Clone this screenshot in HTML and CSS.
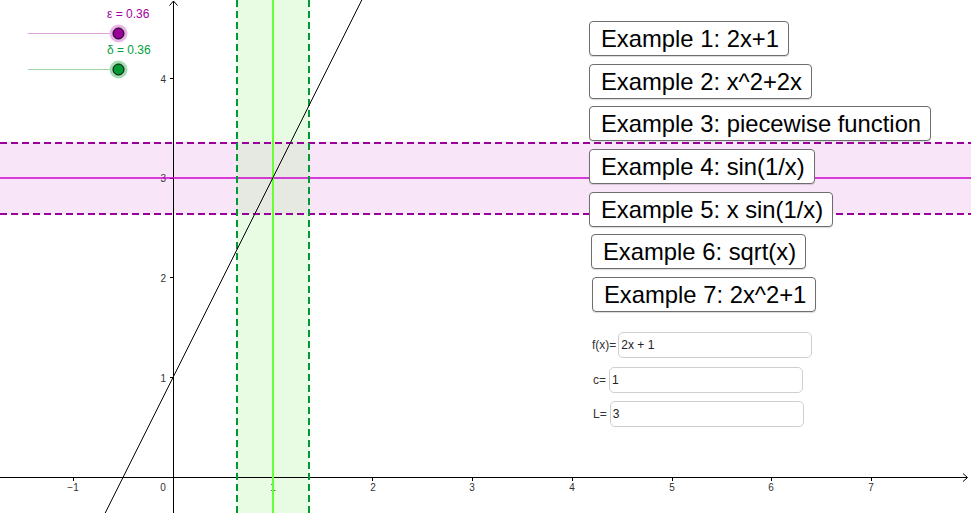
FILE: index.html
```html
<!DOCTYPE html>
<html>
<head>
<meta charset="utf-8">
<link rel="stylesheet" href="styles.css">
</head>
<body>
<div class="applet">
  <svg class="canvas" width="971" height="513" viewBox="0 0 971 513" xmlns="http://www.w3.org/2000/svg">
    <!-- bands -->
    <rect x="0" y="142.5" width="971" height="71.5" fill="#f8e6f8"/>
    <rect x="237" y="0" width="72" height="513" fill="#e8fce4"/>
    <rect x="237" y="142.5" width="72" height="71.5" fill="#e6e8e2"/>

    <!-- axes -->
    <g stroke="#000" stroke-width="1" fill="none">
      <line x1="0" y1="477.5" x2="967" y2="477.5"/>
      <polyline points="963,473.5 967.5,477.5 963,481.5"/>
      <line x1="173.5" y1="513" x2="173.5" y2="1"/>
      <polyline points="169.5,5.5 173.5,1 177.5,5.5"/>
      <!-- x ticks -->
      <line x1="73.5" y1="477.5" x2="73.5" y2="481"/>
      <line x1="273.5" y1="477.5" x2="273.5" y2="481"/>
      <line x1="372.5" y1="477.5" x2="372.5" y2="481"/>
      <line x1="472.5" y1="477.5" x2="472.5" y2="481"/>
      <line x1="572.5" y1="477.5" x2="572.5" y2="481"/>
      <line x1="672.5" y1="477.5" x2="672.5" y2="481"/>
      <line x1="771.5" y1="477.5" x2="771.5" y2="481"/>
      <line x1="871.5" y1="477.5" x2="871.5" y2="481"/>
      <!-- y ticks -->
      <line x1="170" y1="377.5" x2="173.5" y2="377.5"/>
      <line x1="170" y1="277.5" x2="173.5" y2="277.5"/>
      <line x1="170" y1="178.5" x2="173.5" y2="178.5"/>
      <line x1="170" y1="78.5" x2="173.5" y2="78.5"/>
    </g>
    <g class="axis-label" text-anchor="middle">
      <text x="73" y="491">−1</text>
      <text x="163" y="491">0</text>
      <text x="273" y="491">1</text>
      <text x="373" y="491">2</text>
      <text x="472" y="491">3</text>
      <text x="572" y="491">4</text>
      <text x="672" y="491">5</text>
      <text x="771" y="491">6</text>
      <text x="871" y="491">7</text>
    </g>
    <g class="axis-label" text-anchor="end">
      <text x="166" y="382">1</text>
      <text x="166" y="282">2</text>
      <text x="166" y="182">3</text>
      <text x="166" y="83">4</text>
    </g>

    <!-- center lines -->
    <line x1="0" y1="178" x2="971" y2="178" stroke="#cc00cc" stroke-width="1.6"/>
    <line x1="273" y1="0" x2="273" y2="513" stroke="#66ff33" stroke-width="2"/>

    <!-- dashed boundaries -->
    <g stroke-width="2" stroke-dasharray="7 4" fill="none">
      <line x1="0" y1="143" x2="971" y2="143" stroke="#990099"/>
      <line x1="0" y1="214" x2="971" y2="214" stroke="#990099"/>
      <line x1="237" y1="0" x2="237" y2="513" stroke="#009933"/>
      <line x1="309" y1="0" x2="309" y2="513" stroke="#009933"/>
    </g>

    <!-- function f(x)=2x+1 -->
    <line x1="105.2" y1="513" x2="361.8" y2="0" stroke="#000" stroke-width="1"/>

    <!-- sliders -->
    <line x1="28" y1="33.5" x2="127" y2="33.5" stroke="#dba6db" stroke-width="1"/>
    <circle cx="118.5" cy="33.5" r="9" fill="#e9b5e9"/>
    <circle cx="118.5" cy="33.5" r="5.5" fill="#990099" stroke="#000" stroke-width="1"/>
    <text class="slider-label eps" x="107" y="18">ε = 0.36</text>

    <line x1="28" y1="69.5" x2="127" y2="69.5" stroke="#9fd3a8" stroke-width="1"/>
    <circle cx="118.5" cy="69.5" r="9" fill="#a6dab3"/>
    <circle cx="118.5" cy="69.5" r="5.5" fill="#009933" stroke="#000" stroke-width="1"/>
    <text class="slider-label del" x="107" y="54">δ = 0.36</text>
  </svg>

  <div class="buttons">
    <button class="btn">Example 1: 2x+1</button>
    <button class="btn">Example 2: x^2+2x</button>
    <button class="btn">Example 3: piecewise function</button>
    <button class="btn">Example 4: sin(1/x)</button>
    <button class="btn">Example 5: x sin(1/x)</button>
    <button class="btn shift2">Example 6: sqrt(x)</button>
    <button class="btn shift3">Example 7: 2x^2+1</button>
  </div>

  <div class="inputs">
    <div class="field"><span class="lbl">f(x)=</span><div class="box">2x + 1</div></div>
    <div class="field"><span class="lbl">c=</span><div class="box">1</div></div>
    <div class="field"><span class="lbl">L=</span><div class="box">3</div></div>
  </div>
</div>
</body>
</html>
```

FILE: styles.css
```css
html, body {
  margin: 0;
  padding: 0;
  background: #fff;
}

.applet {
  position: relative;
  width: 971px;
  height: 513px;
  overflow: hidden;
  background: #fff;
  font-family: "Liberation Sans", Arial, sans-serif;
}

.canvas {
  position: absolute;
  left: 0;
  top: 0;
  display: block;
}

.axis-label {
  font-family: "Liberation Sans", Arial, sans-serif;
  font-size: 10px;
  fill: #333;
}

.slider-label {
  font-family: "Liberation Sans", Arial, sans-serif;
  font-size: 12px;
}
.slider-label.eps { fill: #a000a0; }
.slider-label.del { fill: #00a03c; }

.buttons {
  position: absolute;
  left: 589px;
  top: 21px;
  display: flex;
  flex-direction: column;
  align-items: flex-start;
  gap: 7.67px;
}

.btn {
  box-sizing: border-box;
  height: 35px;
  margin: 0;
  padding: 0 9px 0 11px;
  font-family: "Liberation Sans", Arial, sans-serif;
  font-size: 23.8px;
  line-height: 33px;
  color: #000;
  background: #fff;
  border: 1px solid #6e6e6e;
  border-radius: 4px;
  box-shadow: 0 1px 1px rgba(0, 0, 0, 0.15);
  white-space: nowrap;
  cursor: pointer;
}
.btn.shift2 { margin-left: 2px; }
.btn.shift3 { margin-left: 3px; }

.inputs {
  position: absolute;
  left: 592px;
  top: 332px;
  display: flex;
  flex-direction: column;
  align-items: flex-start;
  gap: 8.5px;
}

.field {
  display: flex;
  align-items: center;
  height: 26px;
}

.lbl {
  font-size: 12px;
  color: #333;
  margin-right: 2px;
}
.field:nth-child(2) .lbl,
.field:nth-child(3) .lbl { margin-left: 1px; margin-right: 3px; }

.box {
  box-sizing: border-box;
  width: 194px;
  height: 26px;
  padding: 0 2px;
  border: 1px solid #cfcfcf;
  border-radius: 5px;
  background: #fff;
  font-size: 12px;
  color: #222;
  line-height: 24px;
}
```
